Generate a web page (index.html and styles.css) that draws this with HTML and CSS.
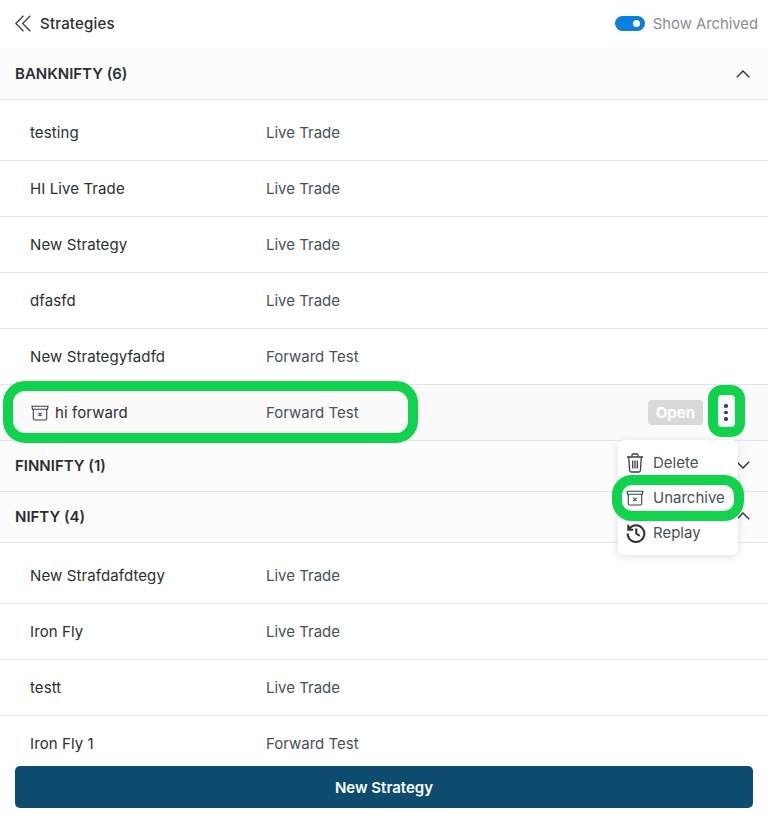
FILE: index.html
```html
<!DOCTYPE html>
<html lang="en">
<head>
<meta charset="utf-8">
<title>Strategies</title>
<link rel="stylesheet" href="styles.css">
</head>
<body>
<div class="app">
  <header class="top">
    <div class="title">
      <svg class="back" width="16" height="17" viewBox="0 0 16 17" fill="none" stroke="#3a3f45" stroke-width="1.300"><path d="M8.500.8.900 8.500l7.600 7.700M15.300.8 7.700 8.500l7.600 7.700"/></svg>
      <span>Strategies</span>
    </div>
    <div class="archived">
      <span class="toggle"><span class="knob"></span></span>
      <span>Show Archived</span>
    </div>
  </header>
  <main class="list">
    <section>
      <div class="head head-first"><span>BANKNIFTY (6)</span><svg class="chev" width="14" height="8" viewBox="0 0 14 8" fill="none" stroke="#333" stroke-width="1.4"><path d="M.8 7.200 7 1l6.200 6.200"/></svg></div>
      <div class="row first"><span class="name">testing</span><span class="type">Live Trade</span></div>
      <div class="row"><span class="name">HI Live Trade</span><span class="type">Live Trade</span></div>
      <div class="row"><span class="name">New Strategy</span><span class="type">Live Trade</span></div>
      <div class="row"><span class="name">dfasfd</span><span class="type">Live Trade</span></div>
      <div class="row"><span class="name">New Strategyfadfd</span><span class="type">Forward Test</span></div>
      <div class="row hover">
        <span class="name">
          <svg class="arch" width="18" height="16" viewBox="0 0 18 16" fill="none" stroke="#3a3f45" stroke-width="1.100"><path d="M1 1.200h16l-.5 3h-15zM2.300 4.200v9.300a1.500 1.500 0 0 0 1.500 1.500h10.400a1.500 1.500 0 0 0 1.500-1.500V4.200M7.400 7.800l3.200 3.200M10.600 7.800l-3.200 3.200"/></svg>
          hi forward
        </span>
        <span class="type">Forward Test</span>
        <span class="actions">
          <span class="open">Open</span>
          <span class="dots"><i></i><i></i><i></i></span>
        </span>
      </div>
    </section>
    <section>
      <div class="head"><span>FINNIFTY (1)</span><svg class="chev" width="14" height="8" viewBox="0 0 14 8" fill="none" stroke="#333" stroke-width="1.4"><path d="M.8.800 7 7l6.200-6.200"/></svg></div>
    </section>
    <section>
      <div class="head"><span>NIFTY (4)</span><svg class="chev" width="14" height="8" viewBox="0 0 14 8" fill="none" stroke="#333" stroke-width="1.4"><path d="M.8 7.200 7 1l6.200 6.200"/></svg></div>
      <div class="row first"><span class="name">New Strafdafdtegy</span><span class="type">Live Trade</span></div>
      <div class="row"><span class="name">Iron Fly</span><span class="type">Live Trade</span></div>
      <div class="row"><span class="name">testt</span><span class="type">Live Trade</span></div>
      <div class="row"><span class="name">Iron Fly 1</span><span class="type">Forward Test</span></div>
    </section>
  </main>
  <footer class="foot"><button class="new">New Strategy</button></footer>

  <div class="menu">
    <div class="item">
      <svg width="18" height="20" viewBox="0 0 18 20" fill="none" stroke="#3a3f45" stroke-width="1.300"><path d="M1 4h16M6 4V2.200C6 1.500 6.500 1 7.200 1h3.600c.7 0 1.200.5 1.200 1.200V4M2.700 4l.9 13.500c.1.900.7 1.500 1.600 1.500h7.600c.9 0 1.500-.6 1.600-1.500L15.300 4M6.700 7.500v8M9 7.500v8M11.300 7.500v8"/></svg>
      <span>Delete</span>
    </div>
    <div class="item">
      <svg width="18" height="16" viewBox="0 0 18 16" fill="none" stroke="#3a3f45" stroke-width="1.100"><path d="M1 1.200h16l-.5 3h-15zM2.300 4.200v9.300a1.500 1.500 0 0 0 1.500 1.500h10.400a1.500 1.500 0 0 0 1.500-1.500V4.200M7.400 7.800l3.200 3.200M10.600 7.800l-3.200 3.200"/></svg>
      <span>Unarchive</span>
    </div>
    <div class="item">
      <svg class="replay" width="20" height="20" viewBox="0 0 20 20" fill="none" stroke="#2f3338" stroke-width="2.100"><path d="M2.800 6.500A8.300 8.300 0 1 1 1.700 10.500M2.300 1.800v4.900h4.900M10.300 5.500v5l3.400 2.300"/></svg>
      <span>Replay</span>
    </div>
  </div>
  <div class="mark mark-row"></div>
  <div class="mark mark-dots"></div>
  <div class="mark mark-item"></div>
</div>
</body>
</html>
```
FILE: styles.css
```css
* { box-sizing: border-box; }
html, body { margin: 0; height: 100%; background: #fff; }
body { font-family: Inter, "Liberation Sans", sans-serif; color: #2b2f33; overflow: hidden; }
.app { position: relative; width: 773px; height: 815px; display: flex; flex-direction: column; padding-right: 5px; }
.top { height: 48px; flex: none; display: flex; align-items: center; justify-content: space-between; padding: 0 10px 0 15px; }
.title { display: flex; align-items: center; gap: 9px; font-size: 15px; font-weight: 500; letter-spacing: .2px; line-height: 18px; margin-bottom: 1px; }
.archived { display: flex; align-items: center; gap: 8px; font-size: 14.800px; color: #868e96; line-height: 18px; margin-bottom: 1px; }
.toggle { width: 30px; height: 15px; border-radius: 8px; background: #0a7fdc; display: flex; align-items: center; justify-content: flex-end; padding-right: 5px; }
.knob { width: 7px; height: 7px; border-radius: 50%; background: #fff; }
.list { flex: 1; overflow: hidden; min-height: 0; }
.head { height: 51px; background: #fcfcfc; border-bottom: 1px solid #e6e6ea; display: flex; align-items: center; justify-content: space-between; padding: 0 18px 2px 15px; font-size: 15px; font-weight: 600; }
.head-first { height: 52px; padding-bottom: 0; }
.row { height: 56px; border-bottom: 1px solid #e6e6ea; display: flex; align-items: center; padding-left: 30px; font-size: 15px; position: relative; }
.row.first { height: 61px; padding-top: 4px; }
.row.hover { background: #fbfbfb; }
.name { width: 236px; flex: none; display: flex; align-items: center; gap: 6px; letter-spacing: .1px; }
.type { color: #47505a; }
.arch { margin-left: 1px; }
.actions { position: absolute; right: 35px; top: 0; bottom: 0; display: flex; align-items: center; gap: 16px; }
.open { background: #d9d9d9; color: #fff; font-weight: 700; font-size: 15px; padding: 0 8px; height: 25px; line-height: 25px; border-radius: 4px; }
.dots { width: 14px; display: flex; flex-direction: column; align-items: center; gap: 3px; }
.dots i { width: 3.500px; height: 3.500px; border-radius: 50%; background: #3a3f45; display: block; }
.foot { flex: none; height: 49px; padding: 0 15px 7px; background: #fff; }
.new { width: 738px; height: 42px; border: 0; border-radius: 5px; background: #0d4c6e; color: #fff; font: 600 15px Inter, "Liberation Sans", sans-serif; }
.menu { position: absolute; left: 618px; top: 440px; width: 120px; height: 115px; background: #fff; border-radius: 6px; box-shadow: 0 2px 10px rgba(0,0,0,.12); padding: 5px 0 0 8px; }
.item { height: 35px; display: flex; align-items: center; gap: 9px; font-size: 15px; color: #4a5057; position: relative; z-index: 2; }
.item svg { flex: none; width: 18px; }
.item .replay { width: 20px; height: 20px; margin-right: -2px; }
.mark { position: absolute; border: 10px solid #10d24c; pointer-events: none; }
.mark-row { left: 3px; top: 381px; width: 415px; height: 62px; border-radius: 22px; }
.mark-dots { left: 708px; top: 385px; width: 37px; height: 52px; border-radius: 14px; }
.mark-item { left: 612px; top: 475px; width: 132px; height: 46px; border-radius: 20px; }
```
